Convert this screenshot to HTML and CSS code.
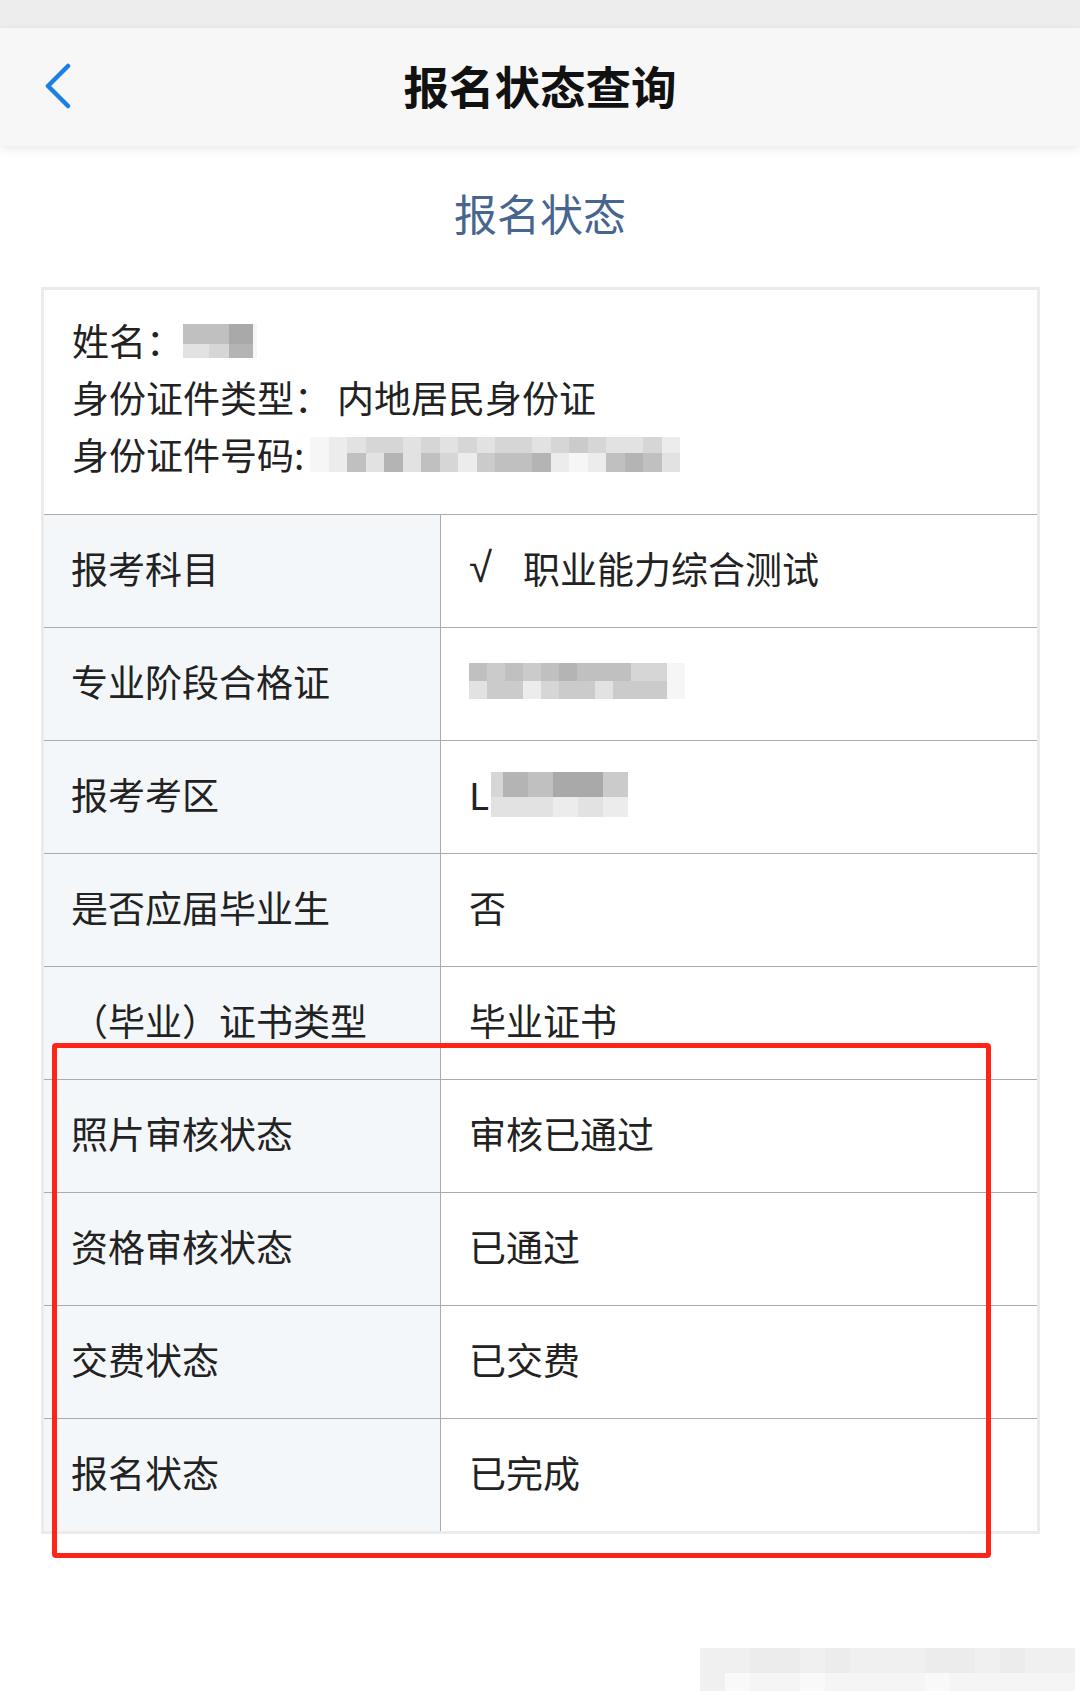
FILE: index.html
```html
<!DOCTYPE html>
<html lang="zh-CN">
<head>
<meta charset="utf-8">
<title>报名状态查询</title>
<link rel="stylesheet" href="styles.css">
</head>
<body>
<div class="statusbar"></div>
<header class="navbar">
  <svg class="back" width="34" height="46" viewBox="0 0 34 46"><polyline points="26,3 6,23 26,43" fill="none" stroke="#1a7ee6" stroke-width="4.5" stroke-linecap="round" stroke-linejoin="round"/></svg>
  <h1 class="nav-title">报名状态查询</h1>
</header>
<main class="page">
  <h2 class="subtitle">报名状态</h2>
  <div class="card-wrap">
    <section class="card">
      <div class="info">
        <div class="info-line">姓名：<span class="mosaic m-name">
          <span class="mrow"><i class="c s3 w26"></i><i class="c s3 w20"></i><i class="c s1 w24"></i><i class="c s8 w4"></i></span>
          <span class="mrow"><i class="c s6 w26"></i><i class="c s5 w20"></i><i class="c s2 w24"></i><i class="c s8 w4"></i></span>
        </span></div>
        <div class="info-line">身份证件类型：<span class="val">内地居民身份证</span></div>
        <div class="info-line">身份证件号码:<span class="mosaic m-id">
          <span class="mrow"><i class="c s8"></i><i class="c s7"></i><i class="c s6"></i><i class="c s5"></i><i class="c s5"></i><i class="c s6"></i><i class="c s5"></i><i class="c s6"></i><i class="c s5"></i><i class="c s6"></i><i class="c s5"></i><i class="c s5"></i><i class="c s6"></i><i class="c s5"></i><i class="c s4"></i><i class="c s5"></i><i class="c s6"></i><i class="c s6"></i><i class="c s5"></i><i class="c s7"></i></span>
          <span class="mrow"><i class="c s8"></i><i class="c s7"></i><i class="c s3"></i><i class="c s6"></i><i class="c s2"></i><i class="c s6"></i><i class="c s3"></i><i class="c s5"></i><i class="c s7"></i><i class="c s4"></i><i class="c s3"></i><i class="c s3"></i><i class="c s2"></i><i class="c s7"></i><i class="c s8"></i><i class="c s7"></i><i class="c s3"></i><i class="c s2"></i><i class="c s3"></i><i class="c s6"></i></span>
        </span></div>
      </div>
      <div class="row"><div class="label">报考科目</div><div class="value"><span class="check">√</span>职业能力综合测试</div></div>
      <div class="row"><div class="label">专业阶段合格证</div><div class="value"><span class="mosaic m-cert">
          <span class="mrow"><i class="c s3"></i><i class="c s4"></i><i class="c s3"></i><i class="c s4"></i><i class="c s3"></i><i class="c s2"></i><i class="c s3"></i><i class="c s3"></i><i class="c s3"></i><i class="c s5"></i><i class="c s5"></i><i class="c s8"></i></span>
          <span class="mrow"><i class="c s6"></i><i class="c s4"></i><i class="c s4"></i><i class="c s7"></i><i class="c s5"></i><i class="c s4"></i><i class="c s4"></i><i class="c s6"></i><i class="c s4"></i><i class="c s4"></i><i class="c s4"></i><i class="c s8"></i></span>
        </span></div></div>
      <div class="row"><div class="label">报考考区</div><div class="value">L<span class="mosaic m-area">
          <span class="mrow"><i class="c s5 w12"></i><i class="c s2"></i><i class="c s3"></i><i class="c s1"></i><i class="c s1"></i><i class="c s4"></i></span>
          <span class="mrow"><i class="c s6 w12"></i><i class="c s6"></i><i class="c s6"></i><i class="c s7"></i><i class="c s6"></i><i class="c s7"></i></span>
        </span></div></div>
      <div class="row"><div class="label">是否应届毕业生</div><div class="value">否</div></div>
      <div class="row"><div class="label">（毕业）证书类型</div><div class="value">毕业证书</div></div>
      <div class="row"><div class="label">照片审核状态</div><div class="value">审核已通过</div></div>
      <div class="row"><div class="label">资格审核状态</div><div class="value">已通过</div></div>
      <div class="row"><div class="label">交费状态</div><div class="value">已交费</div></div>
      <div class="row"><div class="label">报名状态</div><div class="value">已完成</div></div>
    </section>
    <div class="highlight"></div>
  </div>
  <div class="footer-mark">
    <span class="mosaic m-foot">
      <span class="mrow"><i class="c f2"></i><i class="c f2"></i><i class="c f1"></i><i class="c f1"></i><i class="c f2"></i><i class="c f1"></i><i class="c f2"></i><i class="c f2"></i><i class="c f2"></i><i class="c f1"></i><i class="c f1"></i><i class="c f2"></i><i class="c f1"></i><i class="c f2"></i><i class="c f2"></i></span>
      <span class="mrow"><i class="c f2"></i><i class="c f4"></i><i class="c f3"></i><i class="c f3"></i><i class="c f4"></i><i class="c f3"></i><i class="c f3"></i><i class="c f3"></i><i class="c f3"></i><i class="c f4"></i><i class="c f3"></i><i class="c f3"></i><i class="c f3"></i><i class="c f3"></i><i class="c f3"></i></span>
    </span>
  </div>
</main>
</body>
</html>
```

FILE: styles.css
```css
html, body {
  margin: 0;
  padding: 0;
  background: #ffffff;
}
body {
  width: 1080px;
  height: 1695px;
  overflow: hidden;
  font-family: "Noto Sans CJK SC", "Noto Sans", sans-serif;
  color: #222222;
}
.statusbar {
  height: 28px;
  background: #ededed;
}
.navbar {
  position: relative;
  height: 118px;
  background: #f7f7f7;
  box-shadow: 0 3px 10px rgba(0, 0, 0, 0.09);
  display: flex;
  align-items: center;
  justify-content: center;
}
.back {
  position: absolute;
  left: 42px;
  top: 35px;
}
.nav-title {
  margin: 0;
  font-size: 45.5px;
  font-weight: 700;
  color: #111111;
  padding-bottom: 4px;
}
.page {
  position: relative;
  height: 1549px;
}
.subtitle {
  margin: 0;
  height: 141px;
  line-height: 132px;
  text-align: center;
  font-size: 43px;
  font-weight: 400;
  color: #46668f;
}
.card-wrap {
  position: relative;
  margin-left: 41px;
  width: 999px;
}
.card {
  border: 3px solid #ebebeb;
  background: #ffffff;
}
.info {
  padding: 22px 28px 31px;
  font-size: 37px;
}
.info-line {
  height: 57px;
  line-height: 57px;
  white-space: nowrap;
  display: flex;
  align-items: center;
}
.val {
  margin-left: 6px;
}
.row {
  display: flex;
  height: 112px;
  border-top: 1px solid #ababab;
  font-size: 37px;
}
.label {
  width: 397px;
  background: #f4f7f9;
  border-right: 1px solid #ababab;
  padding: 0 0 6px 27px;
  display: flex;
  align-items: center;
  box-sizing: border-box;
}
.value {
  flex: 1;
  padding: 0 0 6px 28px;
  display: flex;
  align-items: center;
}
.check {
  display: inline-block;
  width: 54px;
  font-family: "Liberation Sans", "DejaVu Sans", sans-serif;
  font-size: 42px;
}
.mosaic {
  display: inline-flex;
  flex-direction: column;
}
.mrow {
  display: flex;
}
.c {
  display: block;
  width: 18px;
}
.m-name { margin-left: 0; }
.m-name .mrow:first-child .c { height: 20px; }
.m-name .mrow:last-child .c { height: 14px; }
.m-id { margin-left: 6px; }
.m-id .mrow:first-child .c { height: 16px; }
.m-id .mrow:last-child .c { height: 19px; }
.m-id .c { width: 18.5px; }
.m-cert .c { height: 18px; }
.m-area { margin-left: 2px; }
.m-area .c { width: 25px; }
.m-area .mrow:first-child .c { height: 25px; }
.m-area .mrow:last-child .c { height: 20px; }
.m-area .c.w12 { width: 12px; }
.w26 { width: 26px !important; }
.w24 { width: 24px !important; }
.w20 { width: 20px !important; }
.w4 { width: 4px !important; }
.s1 { background: #a9a9a9; }
.s2 { background: #b4b4b4; }
.s3 { background: #c0c0c0; }
.s4 { background: #cbcbcb; }
.s5 { background: #d6d6d6; }
.s6 { background: #e2e2e2; }
.s7 { background: #ececec; }
.s8 { background: #f6f6f6; }
.f1 { background: #ececec; }
.f2 { background: #f0f0f0; }
.f3 { background: #f5f5f5; }
.f4 { background: #f9f9f9; }
.highlight {
  position: absolute;
  left: 11px;
  top: 756px;
  width: 929px;
  height: 505px;
  border: 5px solid #ff2418;
  border-radius: 4px;
  pointer-events: none;
}
.footer-mark {
  position: absolute;
  left: 700px;
  top: 1502px;
}
.m-foot .c { width: 25px; }
.m-foot .mrow:first-child .c { height: 25px; }
.m-foot .mrow:last-child .c { height: 18px; }
```
